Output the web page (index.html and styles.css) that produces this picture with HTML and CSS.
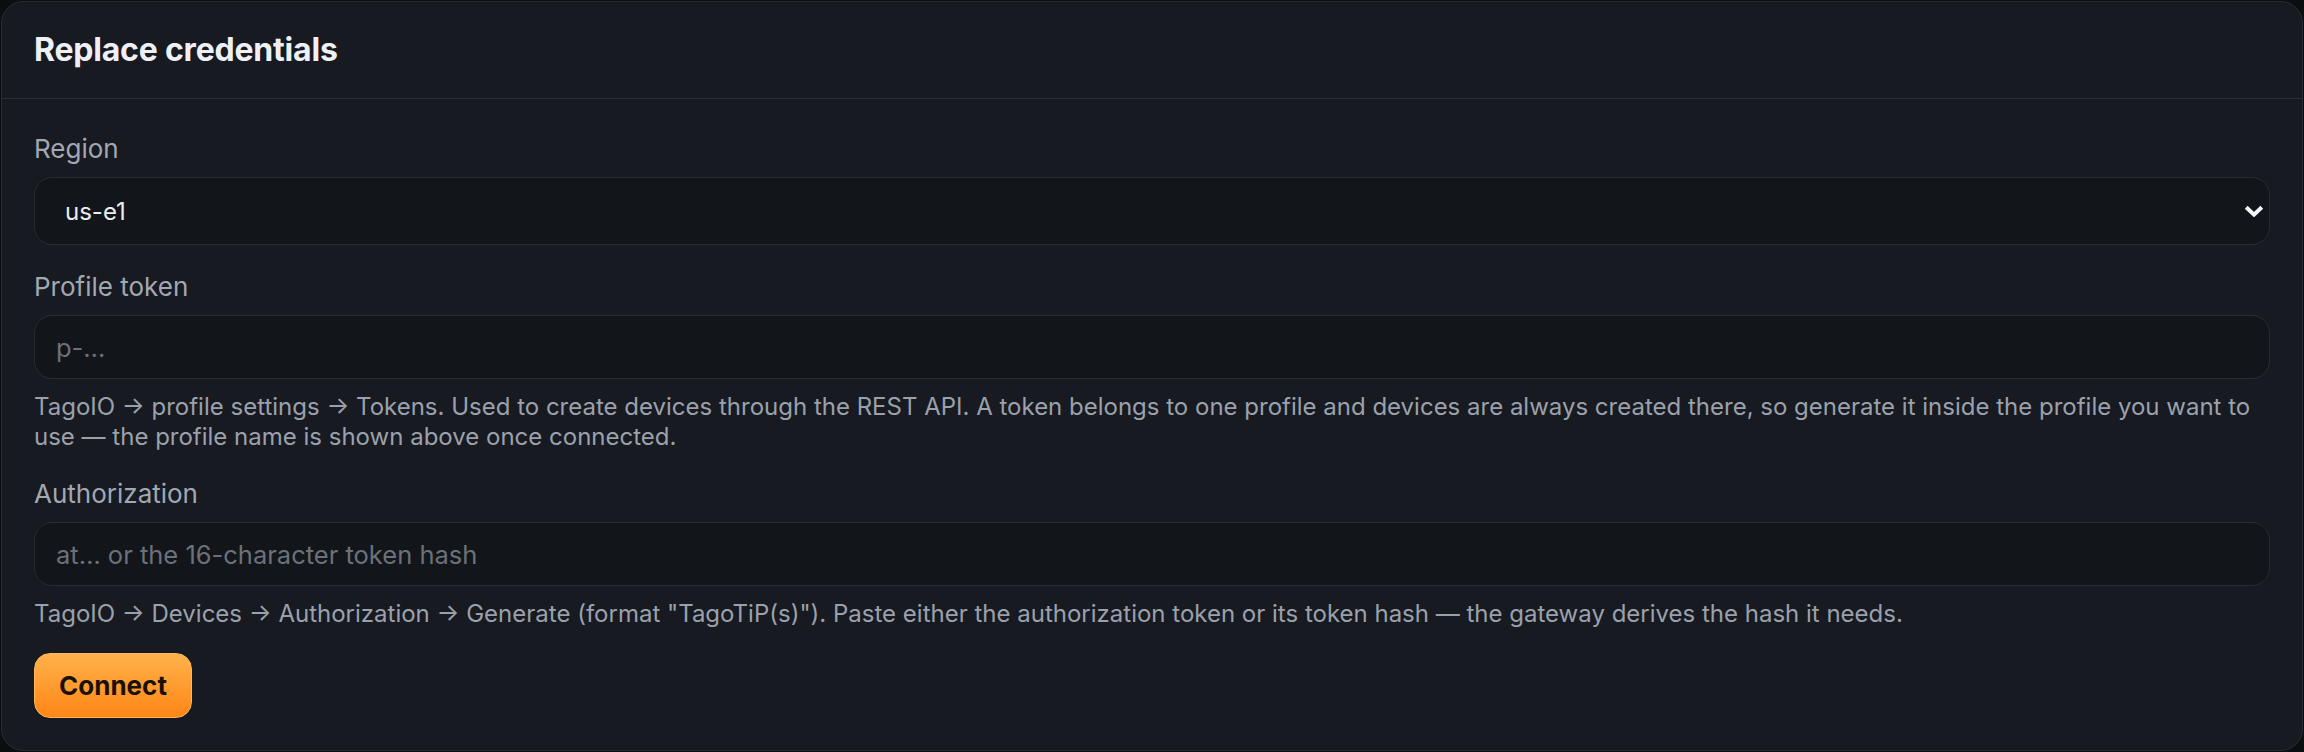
FILE: index.html
```html
<!DOCTYPE html>
<html lang="en">
<head>
<meta charset="utf-8">
<title>Replace credentials</title>
<link rel="stylesheet" href="styles.css">
</head>
<body>
<section class="card">
  <header class="card-header">
    <h2 class="card-title">Replace credentials</h2>
  </header>
  <form class="card-body">
    <div class="field">
      <label class="field-label" for="region">Region</label>
      <div class="select-wrap">
        <select id="region" class="control select">
          <option>us-e1</option>
        </select>
        <svg class="chevron" viewBox="0 0 20 12" width="20" height="12" aria-hidden="true">
          <path d="M2.2 2.2 L10 9.6 L17.8 2.2" fill="none" stroke="#f4f6f9" stroke-width="4" stroke-linecap="butt" stroke-linejoin="miter"/>
        </svg>
      </div>
    </div>
    <div class="field">
      <label class="field-label" for="ptoken">Profile token</label>
      <input id="ptoken" class="control input" type="text" placeholder="p-…">
      <p class="help">TagoIO → profile settings → Tokens. Used to create devices through the REST API. A token belongs to one profile and devices are always created there, so generate it inside the profile you want to use — the profile name is shown above once connected.</p>
    </div>
    <div class="field">
      <label class="field-label" for="auth">Authorization</label>
      <input id="auth" class="control input" type="text" placeholder="at… or the 16-character token hash">
      <p class="help">TagoIO → Devices → Authorization → Generate (format "TagoTiP(s)"). Paste either the authorization token or its token hash — the gateway derives the hash it needs.</p>
    </div>
    <div class="actions">
      <button type="button" class="btn-primary">Connect</button>
    </div>
  </form>
</section>
</body>
</html>
```

FILE: styles.css
```css
* { box-sizing: border-box; }

html, body {
  margin: 0;
  padding: 0;
  background: #0b0d10;
}

body {
  padding: 1px;
  font-family: Inter, "Noto Sans", "Liberation Sans", sans-serif;
}

.card {
  background: #171a21;
  border: 1px solid #262b34;
  border-radius: 22px;
  height: 750px;
  overflow: hidden;
}

.card-header {
  padding: 28px 32px 28px;
  border-bottom: 1px solid #272c35;
}

.card-title {
  margin: 0;
  font-size: 32px;
  line-height: 40px;
  font-weight: 700;
  color: #eef0f5;
  letter-spacing: -0.2px;
}

.card-body {
  padding: 32px 32px 32px;
  display: flex;
  flex-direction: column;
  gap: 24px;
}

.field {
  display: flex;
  flex-direction: column;
}

.field-label {
  font-size: 26px;
  line-height: 36px;
  color: #a2a8b3;
  margin-bottom: 10px;
}

.control {
  width: 100%;
  background: #121519;
  border: 1px solid #272c35;
  border-radius: 18px;
  font-family: Inter, "Noto Sans", "Liberation Sans", sans-serif;
  color: #e9ecf1;
  outline: none;
}

.select-wrap {
  position: relative;
}

.select {
  -webkit-appearance: none;
  appearance: none;
  height: 68px;
  padding: 0 40px 0 30px;
  font-size: 24px;
}

.chevron {
  position: absolute;
  right: 6px;
  top: 28px;
  pointer-events: none;
}

.input {
  height: 64px;
  padding: 0 21px;
  font-size: 25.5px;
}

.input::placeholder {
  color: #6c7179;
}

.help {
  margin: 13px 0 0;
  font-size: 24px;
  line-height: 30px;
  color: #9ba1ac;
}

.actions {
  display: flex;
}

.btn-primary {
  height: 65px;
  width: 158px;
  border-radius: 16px;
  border: 1px solid #ffb55a;
  background: linear-gradient(180deg, #ffb24c 0%, #ff8616 100%);
  color: #1a1106;
  font-family: Inter, "Noto Sans", "Liberation Sans", sans-serif;
  font-size: 26px;
  font-weight: 700;
  cursor: pointer;
}
```
